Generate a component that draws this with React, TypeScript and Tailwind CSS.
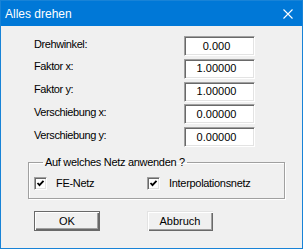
const rows = [
    { label: "Drehwinkel:", value: "0.000" },
    { label: "Faktor x:", value: "1.00000" },
    { label: "Faktor y:", value: "1.00000" },
    { label: "Verschiebung x:", value: "0.00000" },
    { label: "Verschiebung y:", value: "0.00000" },
];

function CheckBox({ label, width }: { label: string; width: string }) {
    return (
        <div className={`flex items-center ${width}`}>
            <div className="w-[13px] h-[13px] bg-white border border-t-[#a0a0a0] border-l-[#a0a0a0] border-r-white border-b-white shadow-[inset_1px_1px_0_#696969,inset_-1px_-1px_0_#e3e3e3] flex items-center justify-center">
                <svg width="9" height="9" viewBox="0 0 9 9">
                    <path d="M1.5 4 L3.5 6.2 L7.5 1.8" fill="none" stroke="#000" strokeWidth="1.8" />
                </svg>
            </div>
            <span className="ml-[9px] text-[11px] tracking-[-0.3px] leading-[13px] text-black">
                {label}
            </span>
        </div>
    );
}

export default function App() {
    return (
        <div className="w-[304px] h-[250px] bg-white font-['Liberation_Sans',Arial,sans-serif]">
            <div className="w-[303px] h-[249px] border border-[#1883d7] bg-[#f0f0f0] flex flex-col">

                {/* Title bar */}
                <div className="h-[25px] bg-[#0078d7] flex items-center justify-between pl-[4px] pr-[9px]">
                    <span className="text-white text-[12px] leading-[14px]">Alles drehen</span>
                    <svg width="10" height="10" viewBox="0 0 10 10">
                        <path d="M0.5 0.5 L9.5 9.5 M9.5 0.5 L0.5 9.5" stroke="#fff" strokeWidth="1.1" />
                    </svg>
                </div>

                <div className="pl-[27px] pt-[10px]">

                    {/* Input rows */}
                    <div className="flex flex-col gap-[2.75px] pl-[6px]">
                        {rows.map((row) => (
                            <div key={row.label} className="flex items-center h-[20px]">
                                <span className="w-[150px] pb-[4px] text-[11px] tracking-[-0.4px] leading-[13px] text-black">
                                    {row.label}
                                </span>
                                <div className="w-[71px] h-[20px] bg-white border border-t-[#a0a0a0] border-l-[#a0a0a0] border-r-white border-b-white shadow-[inset_1px_1px_0_#696969,inset_-1px_-1px_0_#e3e3e3] flex items-center justify-center pr-[6px]">
                                    <span className="text-[11px] leading-[13px] text-black">{row.value}</span>
                                </div>
                            </div>
                        ))}
                    </div>

                    {/* Group box */}
                    <fieldset className="mt-[9px] w-[257px] border border-[#a0a0a0] shadow-[1px_1px_0_#fff,inset_1px_1px_0_#fff] pl-[5px] pt-[8px] pb-[8px]">
                        <legend className="ml-[9px] px-[2px] text-[11px] tracking-[-0.3px] leading-[13px] text-black">
                            Auf welches Netz anwenden ?
                        </legend>
                        <div className="flex">
                            <CheckBox label="FE-Netz" width="w-[113px]" />
                            <CheckBox label="Interpolationsnetz" width="w-[130px]" />
                        </div>
                    </fieldset>

                    {/* Buttons */}
                    <div className="flex gap-[47px] ml-[6px] mt-[12px]">
                        <button className="w-[66px] h-[20px] border border-[#696969] bg-[#f0f0f0] shadow-[inset_1px_1px_0_#fff,inset_-1px_-1px_0_#696969,inset_-2px_-2px_0_#a0a0a0] flex items-center justify-center text-[11px] leading-[13px] text-black">
                            OK
                        </button>
                        <button className="w-[66px] h-[20px] bg-[#f0f0f0] shadow-[inset_1px_1px_0_#e3e3e3,inset_2px_2px_0_#fff,inset_-1px_-1px_0_#696969,inset_-2px_-2px_0_#a0a0a0] flex items-center justify-center text-[11px] leading-[13px] text-black">
                            Abbruch
                        </button>
                    </div>

                </div>
            </div>
        </div>
    );
}
